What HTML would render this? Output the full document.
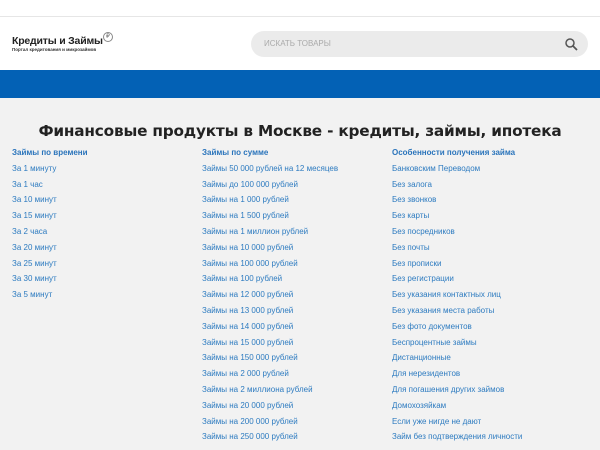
<!DOCTYPE html>
<html><head><meta charset="utf-8"><style>
*{margin:0;padding:0;box-sizing:border-box}
body{width:600px;height:450px;overflow:hidden;background:#f2f2f2;font-family:"Liberation Sans","DejaVu Sans",sans-serif}
.top{height:17px;background:#fff;border-bottom:1px solid #e6e6e6}
.hdr{height:53px;background:#fff;position:relative}
.logo{position:absolute;left:12px;top:18px}
.logo .t{font-size:10.5px;font-weight:bold;color:#222;letter-spacing:-0.2px}
.logo .r{display:inline-block;width:10px;height:10px;border:1px solid #888;border-radius:50%;font-size:6px;line-height:8px;text-align:center;vertical-align:top;margin-top:-3px;color:#666;font-weight:normal}
.logo .s{font-size:4.5px;color:#333;font-weight:bold}
.search{position:absolute;left:251px;top:14px;width:337px;height:26px;background:#ebebeb;border-radius:13px}
.search span{position:absolute;left:13px;top:8px;font-size:8px;color:#aaa}
.search svg{position:absolute;right:10px;top:7px}
.bar{height:28px;background:#0361b5}
h1{font-size:15.3px;font-weight:bold;color:#222;text-align:center;margin-top:22px;height:22px;line-height:22px;font-family:"DejaVu Sans",sans-serif;letter-spacing:-0.2px}
.cols{position:relative;top:3px}
.col{position:absolute;top:0}
.col div{height:15.8px;line-height:15.8px;font-size:8px;color:#2d7bc0;white-space:nowrap}
.col div.h{font-weight:bold;color:#2a74bb}
</style></head><body>
<div class="top"></div>
<div class="hdr">
<div class="logo"><div class="t">Кредиты и Займы<span class="r">₽</span></div><div class="s">Портал кредитования и микрозаймов</div></div>
<div class="search"><span>ИСКАТЬ ТОВАРЫ</span><svg width="13" height="13" viewBox="0 0 13 13"><circle cx="5" cy="5" r="4" fill="none" stroke="#555" stroke-width="1.5"/><path d="M8 8l4 4" stroke="#555" stroke-width="1.8"/></svg></div>
</div>
<div class="bar"></div>
<h1>Финансовые продукты в Москве - кредиты, займы, ипотека</h1>
<div class="cols">
<div class="col" style="left:12px">
<div class="h">Займы по времени</div><div>За 1 минуту</div><div>За 1 час</div><div>За 10 минут</div><div>За 15 минут</div><div>За 2 часа</div><div>За 20 минут</div><div>За 25 минут</div><div>За 30 минут</div><div>За 5 минут</div>
</div>
<div class="col" style="left:202px">
<div class="h">Займы по сумме</div><div>Займы 50 000 рублей на 12 месяцев</div><div>Займы до 100 000 рублей</div><div>Займы на 1 000 рублей</div><div>Займы на 1 500 рублей</div><div>Займы на 1 миллион рублей</div><div>Займы на 10 000 рублей</div><div>Займы на 100 000 рублей</div><div>Займы на 100 рублей</div><div>Займы на 12 000 рублей</div><div>Займы на 13 000 рублей</div><div>Займы на 14 000 рублей</div><div>Займы на 15 000 рублей</div><div>Займы на 150 000 рублей</div><div>Займы на 2 000 рублей</div><div>Займы на 2 миллиона рублей</div><div>Займы на 20 000 рублей</div><div>Займы на 200 000 рублей</div><div>Займы на 250 000 рублей</div>
</div>
<div class="col" style="left:392px">
<div class="h">Особенности получения займа</div><div>Банковским Переводом</div><div>Без залога</div><div>Без звонков</div><div>Без карты</div><div>Без посредников</div><div>Без почты</div><div>Без прописки</div><div>Без регистрации</div><div>Без указания контактных лиц</div><div>Без указания места работы</div><div>Без фото документов</div><div>Беспроцентные займы</div><div>Дистанционные</div><div>Для нерезидентов</div><div>Для погашения других займов</div><div>Домохозяйкам</div><div>Если уже нигде не дают</div><div>Займ без подтверждения личности</div>
</div>
</div>
</body></html>
